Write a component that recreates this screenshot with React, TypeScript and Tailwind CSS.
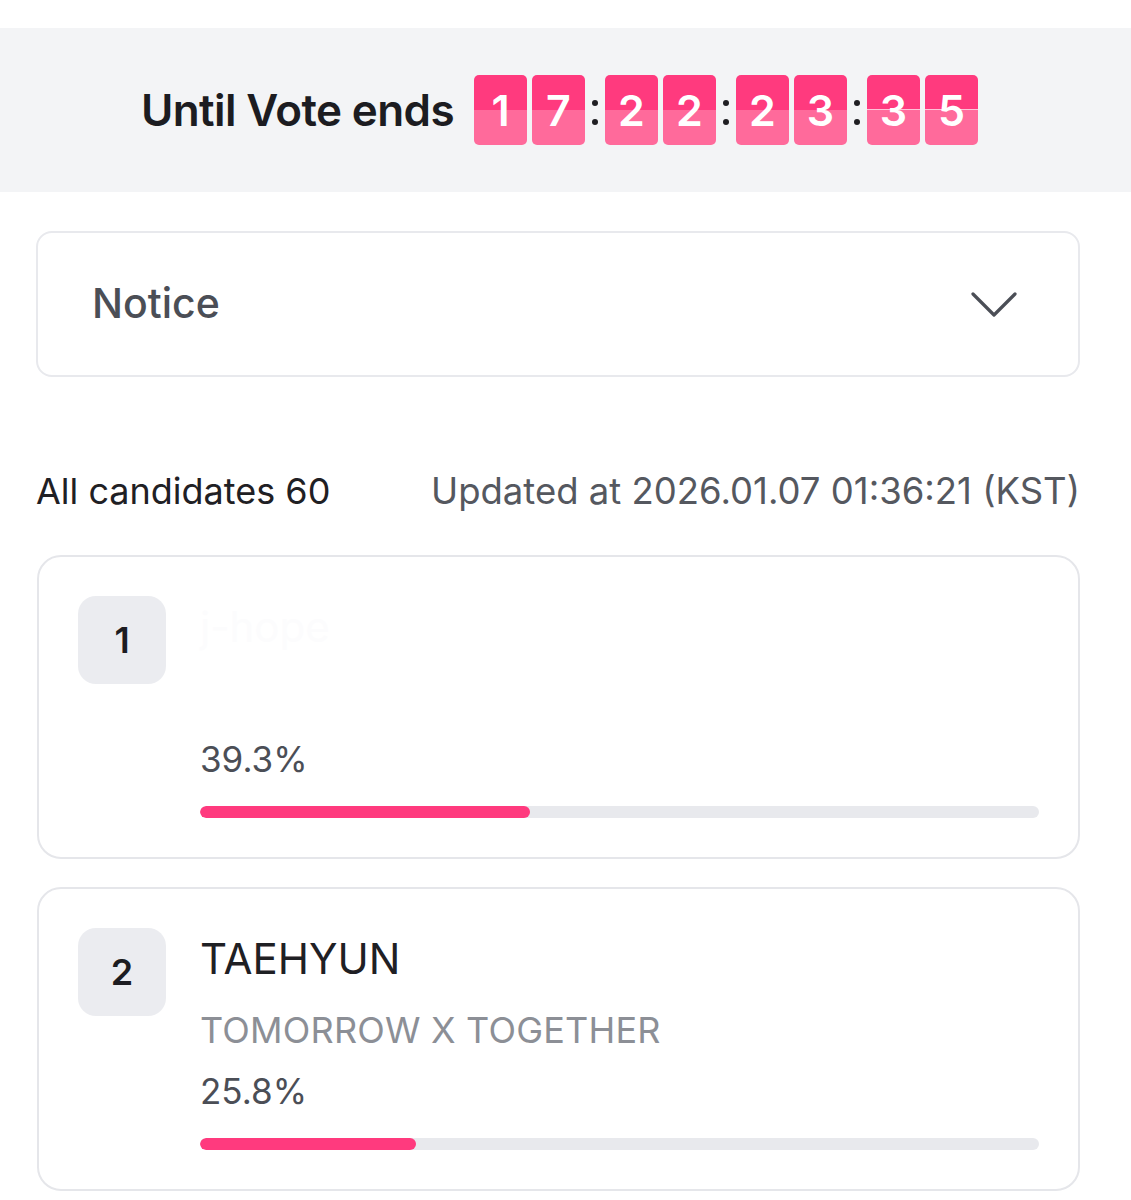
const digits = [
  ['1', '7'],
  ['2', '2'],
  ['2', '3'],
  ['3', '5'],
]

const candidates = [
  { rank: 1, name: 'j-hope', group: '', pct: 39.3, faded: true },
  { rank: 2, name: 'TAEHYUN', group: 'TOMORROW X TOGETHER', pct: 25.8, faded: false },
]

function Digit({ value, split }: { value: string; split?: boolean }) {
  return (
    <div className="relative flex h-[70px] w-[53px] items-center justify-center overflow-hidden rounded-[5px]">
      <div className="absolute inset-x-0 top-0 h-1/2 bg-[#ff3a7e]" />
      <div className="absolute inset-x-0 bottom-0 h-1/2 bg-[#ff6a9b]" />
      {split && <div className="absolute inset-x-0 top-[34px] h-px bg-white/70" />}
      <span className="relative text-[43px] font-semibold leading-none text-white">{value}</span>
    </div>
  )
}

function Colon() {
  return (
    <div className="flex w-[20px] flex-col items-center justify-center gap-[13px] pt-[4px]">
      <span className="h-[6px] w-[6px] rounded-full bg-[#1f1f23]" />
      <span className="h-[6px] w-[6px] rounded-full bg-[#1f1f23]" />
    </div>
  )
}

export default function App() {
  return (
    <div className="min-h-[1200px] bg-white pt-[28px] font-['Inter',sans-serif]">
      <section className="flex h-[164px] items-center justify-center gap-[20px] bg-[#f3f4f6] pr-[12px]">
        <h1 className="text-[44px] font-semibold tracking-[-0.6px] text-[#1c1c21]">Until Vote ends</h1>
        <div className="flex items-center">
          {digits.map((pair, i) => (
            <div key={i} className="flex items-center">
              {i > 0 && <Colon />}
              <div className="flex gap-[5px]">
                {pair.map((d, j) => (
                  <Digit key={j} value={d} split={i === 3} />
                ))}
              </div>
            </div>
          ))}
        </div>
      </section>

      <main className="pl-[36px] pr-[51px]">
        <button
          type="button"
          className="mt-[39px] flex h-[146px] w-full items-center justify-between rounded-[16px] border-2 border-[#e8e9ed] pl-[54px] pr-[61px]"
        >
          <span className="text-[41px] font-medium text-[#4b4e56]">Notice</span>
          <svg width="46" height="26" viewBox="0 0 46 26" fill="none" className="mt-[2px]">
            <path d="M2 2L23 23L44 2" stroke="#4b4e56" strokeWidth="3.2" strokeLinecap="round" strokeLinejoin="round" />
          </svg>
        </button>

        <div className="mt-[92px] flex items-center justify-between text-[36px] leading-[44px]">
          <span className="text-[#1f2024]">All candidates 60</span>
          <span className="text-[36.5px] text-[#55585f]">Updated at 2026.01.07 01:36:21 (KST)</span>
        </div>

        <ul className="mt-[42px] flex flex-col gap-[28px] pl-[1px]">
          {candidates.map((c) => (
            <li
              key={c.rank}
              className="flex gap-[34px] rounded-[24px] border-2 border-[#e5e6ea] p-[39px]"
            >
              <div className="flex h-[88px] w-[88px] shrink-0 items-center justify-center rounded-[18px] bg-[#ebecf0] text-[36px] font-semibold text-[#1c1c21]">
                {c.rank}
              </div>
              <div className="flex-1 pt-[6px]">
                <div className={`text-[42px] leading-[50px] ${c.faded ? 'text-[#fcfcfd]' : 'text-[#1f2024]'}`}>
                  {c.name}
                </div>
                <div className="mt-[25px] h-[42px] text-[36px] leading-[42px] tracking-[0.2px] text-[#8c8f96]">{c.group}</div>
                <div className="mt-[19px] text-[35px] leading-[42px] text-[#4b4e56]">{c.pct}%</div>
                <div className="mt-[26px] h-[12px] w-full overflow-hidden rounded-full bg-[#e8e9ed]">
                  <div className="h-full rounded-full bg-[#ff3a7e]" style={{ width: `${c.pct}%` }} />
                </div>
              </div>
            </li>
          ))}
        </ul>
      </main>
    </div>
  )
}
